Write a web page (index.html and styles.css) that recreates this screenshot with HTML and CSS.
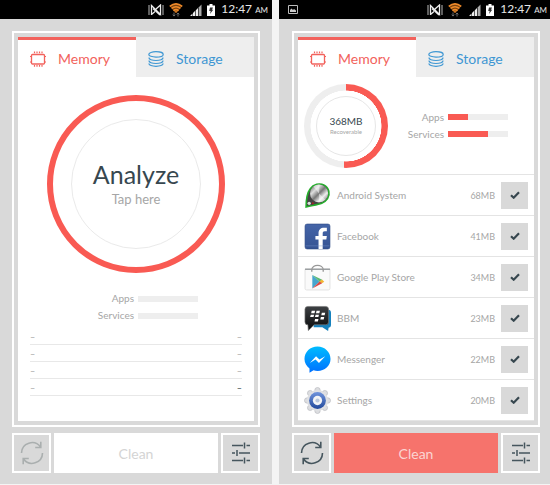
FILE: index.html
```html
<!DOCTYPE html>
<html lang="en">
<head>
<meta charset="utf-8">
<title>Memory cleaner</title>
<link rel="stylesheet" href="styles.css">
</head>
<body>
<svg class="sprite" aria-hidden="true">
  <defs>
    <linearGradient id="steel" x1="0" y1="0" x2="1" y2="1"><stop offset="0" stop-color="#555"/><stop offset=".3" stop-color="#ddd"/><stop offset=".5" stop-color="#777"/><stop offset=".7" stop-color="#eee"/><stop offset="1" stop-color="#555"/></linearGradient>
    <linearGradient id="fb" x1="0" y1="0" x2="0" y2="1"><stop offset="0" stop-color="#4565a8"/><stop offset="1" stop-color="#355393"/></linearGradient>
    <linearGradient id="bbm" x1="0" y1="0" x2="0" y2="1"><stop offset="0" stop-color="#3d4043"/><stop offset="1" stop-color="#08090a"/></linearGradient>
    <linearGradient id="chat" x1="0" y1="0" x2="0" y2="1"><stop offset="0" stop-color="#00bcff"/><stop offset="1" stop-color="#0070ff"/></linearGradient>
    <linearGradient id="blue" x1="0" y1="0" x2="0" y2="1"><stop offset="0" stop-color="#6f93dc"/><stop offset="1" stop-color="#234a9c"/></linearGradient>
  </defs>
  <symbol id="i-mute" viewBox="0 0 16 12"><path d="M1 1v10M15 1v10" fill="none" stroke="#bbb" stroke-width="1"/><path d="M3.500 11V1.500L12.500 10.500V1L8 5M3.500 10.500L7 7.500" fill="none" stroke="#eee" stroke-width="1.300"/><path d="M5 4.500l7 6.500" stroke="#eee" stroke-width="1.500"/></symbol>
  <symbol id="i-wifi" viewBox="0 0 14 14"><path d="M.5 3Q7-2 13.500 3L8 9.500H6z" fill="#7a430f"/><path d="M.8 3.300Q7-1.600 13.200 3.300M2.600 5.400Q7 2 11.400 5.400M4.400 7.600Q7 5.600 9.600 7.600" fill="none" stroke="#ee8a2a" stroke-width="1.600"/><path d="M5.500 8.200h3L7 10z" fill="#ee8a2a"/><path d="M5 9.500v3.500M3.700 11.700L5 13.100l1.300-1.400M9 13.500V10M7.700 11.400L9 10l1.300 1.400" fill="none" stroke="#777" stroke-width=".9"/></symbol>
  <symbol id="i-signal" viewBox="0 0 12 12"><path d="M0 12l2.500-2.500V12zM3 12V9l2.200-2.200V12zM5.800 12V6.200L8 4v8z" fill="#eee"/><path d="M8.600 12V3.400L11.500.500V12z" fill="#aaa"/></symbol>
  <symbol id="i-battery" viewBox="0 0 8 12"><path d="M2.500 0h3v1.500H8V12H0V1.500h2.500z" fill="#fff"/><path d="M3 3.500h3L5 5.800h1.200L3 10l.7-3H2.200z" fill="#333"/></symbol>
  <symbol id="i-picture" viewBox="0 0 10 9"><path d="M.5.500h9v8h-9z" fill="none" stroke="#bbb"/><path d="M2 7V5l1.500-1.500L5 5l1-1 2 1.500V7z" fill="#ccc"/></symbol>
  <symbol id="i-chip" viewBox="0 0 16 16"><rect x="1.500" y="3.500" width="13" height="9.500" rx="1" fill="none" stroke="currentColor" stroke-width="1.300"/><path d="M0 5.500h1.500M0 11h1.500M14.500 5.500H16M14.500 11H16M4.500 2.300V.500M7 2.300V.500M9.500 2.300V.500M12 2.300V.500M4.500 14v1.700M7 14v1.700M9.500 14v1.700M12 14v1.700" stroke="currentColor" stroke-width="1.200"/></symbol>
  <symbol id="i-disks" viewBox="0 0 16 16"><g fill="none" stroke="currentColor" stroke-width="1.200"><ellipse cx="8" cy="3.400" rx="7.200" ry="2.700"/><path d="M1 6.500c-.8 4 14.800 4 14 0M1 9.500c-.8 4 14.800 4 14 0M1 12.300c-.8 4 14.800 4 14 0"/></g></symbol>
  <symbol id="i-refresh" viewBox="0 0 24 24"><path d="M1.500 12A10.500 10.500 0 0 1 20.500 6M20.800.8v5.700h-5.600M22.500 12A10.500 10.500 0 0 1 3.500 18M3.200 23.200v-5.700h5.600" fill="none" stroke="currentColor" stroke-width="1.600"/></symbol>
  <symbol id="i-sliders" viewBox="0 0 20 22"><path d="M1 3.500h11M15.500 3.500H19M1 11h3M8 11h11M1 18.500h11M15.500 18.500H19" stroke="currentColor" stroke-width="1.500"/><path d="M13.500.500v6M6 8v6M13.500 15.500v6" stroke="currentColor" stroke-width="1.500"/></symbol>
  <symbol id="i-check" viewBox="0 0 10 8"><path d="M1 4.200L3.700 6.700 9 1.300" fill="none" stroke="#37474f" stroke-width="2.200"/></symbol>
  <symbol id="i-android" viewBox="0 0 26 26"><path d="M2 24C2 16 3 10.500 6 6.500 9 2 15 .8 19.500 3c4.700 2.700 6 8.500 3.200 13-3.700 5.700-10 5.500-20.700 8z" fill="#444" stroke="#25ad2c" stroke-width="1.500"/><circle cx="14.500" cy="11" r="8.700" fill="url(#steel)"/><path d="M14.500 11L9 4.300a8.500 8.500 0 0 1 6-1.800zM14.500 11l6 6a8.500 8.500 0 0 1-6 2.300z" fill="#fff" opacity=".5"/><circle cx="5" cy="20.500" r="1.600" fill="#ddd"/><circle cx="8.500" cy="20.500" r="1" fill="#a22"/></symbol>
  <symbol id="i-facebook" viewBox="0 0 26 26"><rect x="1" y="1" width="24" height="24" rx="2" fill="url(#fb)" stroke="#2e4a86" stroke-width=".6"/><path d="M14 25v-9h-3v-3.500h3V10c0-3.700 2-5.500 5.300-5.500H22V8h-2c-1.500 0-2 .7-2 2v2.500h4l-.5 3.500H18v9z" fill="#fff"/><path d="M1.500 22h23" stroke="#7b98cf" stroke-width=".8" opacity=".5"/></symbol>
  <symbol id="i-play" viewBox="0 0 26 26"><path d="M1 5h24v18.500q0 1.500-1.500 1.500h-21Q1 25 1 23.500z" fill="#fafafa" stroke="#ddd" stroke-width=".8"/><path d="M1 5h24" stroke="#8a8f92" stroke-width="1.200"/><path d="M7.500 7.500V5.500c0-5.500 11-5.500 11 0v2" fill="none" stroke="#999" stroke-width="1.300"/><path d="M8 10.500v13l7-6.500z" fill="#46a6ce"/><path d="M8 10.500l9.500 4.700-2.500 2z" fill="#5bb974"/><path d="M17.300 15l2.200 2-2.200 1.600-2.700-1.600z" fill="#f2b632"/><path d="M8 23.500l9.500-5-2.500-1.700z" fill="#dc4a46"/></symbol>
  <symbol id="i-bbm" viewBox="0 0 28 26"><path d="M10 4h15q3 0 3 3v13q0 2.500-2.500 2.500L25 26l-6-4h-9z" fill="#1681bd"/><path d="M4 .5h18.500q3 0 3 3v13q0 3-3 3H10.500L4.500 25.500l-.5-6q-3 0-3-3v-13q0-3 3-3z" fill="url(#bbm)" stroke="#777" stroke-width=".7"/><path d="M8 5h3.500l-.6 2.500H7.400zM13 5h3.500l-.6 2.500h-3.500zM18.500 7h3.500l-.6 2.500h-3.500zM7 9h3.500L9.900 11.500H6.400zM12 9h3.500l-.6 2.500h-3.500zM17.500 11.500H21l-.6 2.500h-3.500zM11.500 13.500H15l-.6 2.500h-3.500z" fill="#fff"/></symbol>
  <symbol id="i-messenger" viewBox="0 0 28 28"><path d="M14 .5C6.500.5.500 6 .5 13.500c0 4 2 7.500 5.200 9.800v4.400l4.200-2.500c1.300.4 2.700.6 4.100.6 7.500 0 13.500-5 13.500-12.300S21.500.5 14 .5z" fill="url(#chat)"/><path d="M6 17.500l6.500-7 3.500 3.500 6-3.500-6.500 7L12 14z" fill="#fff"/></symbol>
  <symbol id="i-settings" viewBox="0 0 28 28"><g fill="#dcdde0" stroke="#b9bbbf" stroke-width=".7"><circle cx="14" cy="3.300" r="2.800"/><circle cx="21.600" cy="6.400" r="2.800"/><circle cx="24.700" cy="14" r="2.800"/><circle cx="21.600" cy="21.600" r="2.800"/><circle cx="14" cy="24.700" r="2.800"/><circle cx="6.400" cy="21.600" r="2.800"/><circle cx="3.300" cy="14" r="2.800"/><circle cx="6.400" cy="6.400" r="2.800"/></g><circle cx="14" cy="14" r="11" fill="#dfe0e3"/><circle cx="14" cy="14" r="8.700" fill="url(#blue)"/><circle cx="14" cy="14" r="4.800" fill="#f3f4f6"/><circle cx="14" cy="14" r="2.200" fill="#b9c7de"/></symbol>
</svg>

<main class="screens">
  <section class="phone">
    <header class="status">
      <svg class="s-mute"><use href="#i-mute"/></svg>
      <svg class="s-wifi"><use href="#i-wifi"/></svg>
      <svg class="s-signal"><use href="#i-signal"/></svg>
      <svg class="s-battery"><use href="#i-battery"/></svg>
      <span class="clock">12:47 <small>AM</small></span>
    </header>
    <div class="body">
      <div class="frame">
        <div class="panel">
          <nav class="tabs">
            <button class="tab active"><svg><use href="#i-chip"/></svg>Memory</button>
            <button class="tab"><svg><use href="#i-disks"/></svg>Storage</button>
          </nav>
          <button class="analyze">
            <span class="analyze-inner"><span class="analyze-title">Analyze</span><span class="analyze-hint">Tap here</span></span>
          </button>
          <div class="usage usage-center">
            <span>Apps</span><div class="bar"></div>
            <span>Services</span><div class="bar"></div>
          </div>
          <ul class="empty">
            <li><span>–</span><span>–</span></li>
            <li><span>–</span><span>–</span></li>
            <li><span>–</span><span>–</span></li>
            <li><span>–</span><span class="dark">–</span></li>
          </ul>
        </div>
      </div>
      <footer class="actions">
        <button class="square faded" aria-label="Refresh"><svg class="refresh"><use href="#i-refresh"/></svg></button>
        <button class="clean idle">Clean</button>
        <button class="square" aria-label="Options"><svg class="sliders"><use href="#i-sliders"/></svg></button>
      </footer>
    </div>
  </section>

  <section class="phone phone-results">
    <header class="status">
      <svg class="s-picture"><use href="#i-picture"/></svg>
      <svg class="s-mute"><use href="#i-mute"/></svg>
      <svg class="s-wifi"><use href="#i-wifi"/></svg>
      <svg class="s-signal"><use href="#i-signal"/></svg>
      <svg class="s-battery"><use href="#i-battery"/></svg>
      <span class="clock">12:47 <small>AM</small></span>
    </header>
    <div class="body">
      <div class="frame">
        <div class="panel">
          <nav class="tabs">
            <button class="tab active"><svg><use href="#i-chip"/></svg>Memory</button>
            <button class="tab"><svg><use href="#i-disks"/></svg>Storage</button>
          </nav>
          <div class="summary">
            <div class="donut">
              <div class="donut-inner"><span class="donut-value">368MB</span><span class="donut-label">Recoverable</span></div>
            </div>
            <div class="usage">
              <span>Apps</span><div class="bar"><div class="fill" style="width:33%"></div></div>
              <span>Services</span><div class="bar"><div class="fill" style="width:67%"></div></div>
            </div>
          </div>
          <ul class="apps">
            <li><svg><use href="#i-android"/></svg><label for="a1">Android System</label><span>68MB</span><div class="tick"><input type="checkbox" id="a1" checked><svg><use href="#i-check"/></svg></div></li>
            <li><svg><use href="#i-facebook"/></svg><label for="a2">Facebook</label><span>41MB</span><div class="tick"><input type="checkbox" id="a2" checked><svg><use href="#i-check"/></svg></div></li>
            <li><svg><use href="#i-play"/></svg><label for="a3">Google Play Store</label><span>34MB</span><div class="tick"><input type="checkbox" id="a3" checked><svg><use href="#i-check"/></svg></div></li>
            <li><svg><use href="#i-bbm"/></svg><label for="a4">BBM</label><span>23MB</span><div class="tick"><input type="checkbox" id="a4" checked><svg><use href="#i-check"/></svg></div></li>
            <li><svg><use href="#i-messenger"/></svg><label for="a5">Messenger</label><span>22MB</span><div class="tick"><input type="checkbox" id="a5" checked><svg><use href="#i-check"/></svg></div></li>
            <li><svg><use href="#i-settings"/></svg><label for="a6">Settings</label><span>20MB</span><div class="tick"><input type="checkbox" id="a6" checked><svg><use href="#i-check"/></svg></div></li>
          </ul>
        </div>
      </div>
      <footer class="actions">
        <button class="square" aria-label="Refresh"><svg class="refresh"><use href="#i-refresh"/></svg></button>
        <button class="clean">Clean</button>
        <button class="square" aria-label="Options"><svg class="sliders"><use href="#i-sliders"/></svg></button>
      </footer>
    </div>
  </section>
</main>
</body>
</html>
```
FILE: styles.css
```css
* { box-sizing: border-box; }

body {
  margin: 0;
  background: #f4f4f4;
  font-family: Lato, "Open Sans", sans-serif;
  color: #a6a6a6;
}

button {
  margin: 0;
  padding: 0;
  border: 0;
  background: none;
  font: inherit;
  color: inherit;
}

ul { margin: 0; padding: 0; list-style: none; }
svg { display: block; flex: none; }
.sprite { position: absolute; width: 0; height: 0; }

.screens {
  display: grid;
  grid-template-columns: 272fr 271fr;
  gap: 7px;
  min-height: 100vh;
  padding-bottom: 1px;
}

.phone {
  display: flex;
  flex-direction: column;
  background: #d9d9d9;
}

/* Status bar */
.status {
  display: flex;
  align-items: center;
  justify-content: flex-end;
  height: 19px;
  padding-right: 4px;
  background: #000;
  color: #e6e6e6;
}
.phone-results .status { padding: 0 3px 0 9px; }
.s-picture { width: 10px; height: 9px; margin-right: auto; }
.s-mute { width: 16px; height: 12px; margin-right: 5px; }
.s-wifi { width: 14px; height: 14px; margin-right: 7px; }
.s-signal { width: 12px; height: 12px; margin-right: 5px; }
.s-battery { width: 8px; height: 12px; margin-right: 6px; }
.clock { font-size: 12px; line-height: 19px; white-space: nowrap; }
.clock small { font-size: 8px; }

/* Framed panel */
.body {
  flex: 1;
  display: flex;
  flex-direction: column;
  gap: 6px;
  padding: 12px 12px 11px;
}
.phone-results .body { padding: 12px 10px 11px 13px; }
.frame {
  flex: 1;
  display: flex;
  padding: 4px;
  border: 2px solid #fff;
}
.panel { flex: 1; background: #fff; }

.tabs { display: grid; grid-template-columns: 1fr 1fr; }
.tab {
  display: flex;
  align-items: center;
  gap: 12px;
  height: 40px;
  padding: 3px 12px 0;
  background: #eee;
  color: #3f97d3;
  font-size: 14px;
}
.tab svg { width: 16px; height: 16px; }
.tab.active {
  padding-top: 0;
  border-top: 3px solid #f2625c;
  background: #fff;
  color: #f2625c;
}

/* Analyze dial */
.analyze {
  display: grid;
  place-items: center;
  width: 178px;
  height: 178px;
  margin: 18px auto 0;
  border: 6px solid #f95a53;
  border-radius: 50%;
}
.analyze-inner {
  display: flex;
  flex-direction: column;
  align-items: center;
  justify-content: center;
  width: 130px;
  height: 130px;
  border: 1px solid #eaeaea;
  border-radius: 50%;
}
.analyze-title { font-size: 25px; line-height: 30px; color: #37474f; }
.analyze-hint { font-size: 13px; line-height: 20px; }

.usage {
  display: grid;
  grid-template-columns: auto 60px;
  align-items: center;
  column-gap: 4px;
  font-size: 10px;
  line-height: 17px;
  text-align: right;
}
.usage-center { margin: 17px 56px 0 0; justify-content: end; }
.bar { height: 6px; background: #eee; }
.fill { height: 6px; background: #f95a53; }

.empty { padding: 4px 12px 0; }
.empty li {
  display: flex;
  justify-content: space-between;
  height: 17px;
  border-bottom: 1px solid #e8e8e8;
  font-size: 9px;
  line-height: 18px;
}
.dark { color: #37474f; }

/* Results */
.summary {
  display: flex;
  align-items: center;
  justify-content: space-between;
  height: 97px;
  padding: 0 26px 0 6px;
}
.donut {
  display: grid;
  place-items: center;
  width: 84px;
  height: 84px;
  border-radius: 50%;
  background: radial-gradient(closest-side, #fff 84%, transparent 85%), conic-gradient(#f95a53 183deg, #eee 183deg);
}
.donut-inner {
  display: flex;
  flex-direction: column;
  align-items: center;
  justify-content: center;
  width: 60px;
  height: 60px;
  border: 1px solid #e6e6e6;
  border-radius: 50%;
}
.donut-value { font-size: 10px; line-height: 13px; color: #37474f; }
.donut-label { font-size: 6px; line-height: 8px; }

.apps li {
  display: flex;
  align-items: center;
  height: 41px;
  padding: 0 6px;
  border-top: 1px solid #e4e4e4;
  font-size: 9px;
}
.apps li:last-child { border-bottom: 1px solid #e4e4e4; height: 42px; }
.apps li > svg { width: 27px; height: 27px; }
.apps label { flex: 1; margin-left: 6px; font-size: 10px; }
.tick { display: grid; place-items: center; margin-left: 6px; }
.tick input, .tick svg { grid-area: 1 / 1; }
.tick input {
  appearance: none;
  width: 27px;
  height: 27px;
  margin: 0;
  background: #d9d9d9;
}
.tick svg { width: 10px; height: 8px; pointer-events: none; }

/* Bottom actions */
.actions {
  display: grid;
  grid-template-columns: 39px 1fr 39px;
  gap: 3px;
  height: 40px;
}
.square {
  display: grid;
  place-items: center;
  border: 2px solid #fff;
  color: #46565e;
}
.faded { color: #aaafaf; }
.refresh { width: 24px; height: 24px; }
.sliders { width: 20px; height: 22px; }
.clean { background: #f6736c; color: #fbd5d2; font-size: 14px; }
.clean.idle { background: #fff; color: #d4d4d4; }
```
